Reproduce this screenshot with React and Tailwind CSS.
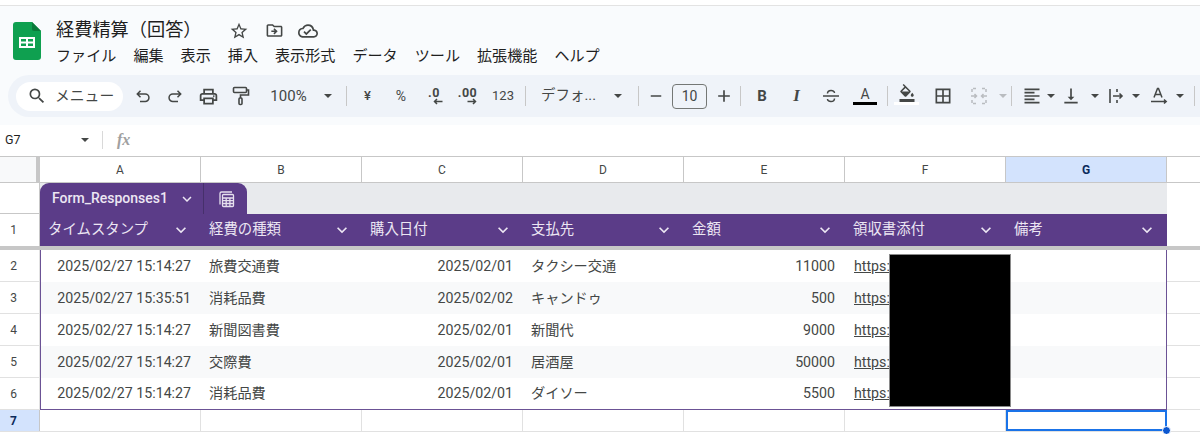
import React from "react";
import {
  MdStarBorder, MdOutlineDriveFileMove, MdOutlineCloudDone, MdSearch,
  MdOutlineLocalPrintshop, MdFormatColorFill,
  MdBorderAll, MdFormatAlignLeft, MdVerticalAlignBottom, MdKeyboardArrowDown, MdRemove, MdAdd,
} from "react-icons/md";

const menus = ["ファイル", "編集", "表示", "挿入", "表示形式", "データ", "ツール", "拡張機能", "ヘルプ"];
const letters = ["A", "B", "C", "D", "E", "F", "G"];
const heads = ["タイムスタンプ", "経費の種類", "購入日付", "支払先", "金額", "領収書添付", "備考"];
const rows = [
  { n: 2, ts: "2025/02/27 15:14:27", kind: "旅費交通費", date: "2025/02/01", to: "タクシー交通", amt: "11000" },
  { n: 3, ts: "2025/02/27 15:35:51", kind: "消耗品費", date: "2025/02/02", to: "キャンドゥ", amt: "500" },
  { n: 4, ts: "2025/02/27 15:14:27", kind: "新聞図書費", date: "2025/02/01", to: "新聞代", amt: "9000" },
  { n: 5, ts: "2025/02/27 15:14:27", kind: "交際費", date: "2025/02/01", to: "居酒屋", amt: "50000" },
  { n: 6, ts: "2025/02/27 15:14:27", kind: "消耗品費", date: "2025/02/01", to: "ダイソー", amt: "5500" },
];
const gridCols = "grid grid-cols-[40px_161px_repeat(6,161px)_1fr]";
const font = { fontFamily: 'Roboto, "Noto Sans CJK JP", sans-serif' };

function Caret({ className = "" }) {
  return <span className={`w-0 h-0 border-x-[4px] border-x-transparent border-t-[4px] border-t-[#444746] ${className}`} />;
}

function Btn({ w, className = "", children }) {
  return <div className={`flex items-center justify-center h-full shrink-0 text-[#444746] ${w} ${className}`}>{children}</div>;
}

function Sep({ className = "" }) {
  return <div className={`w-px h-[20px] bg-[#c7c7c7] shrink-0 ${className}`} />;
}

function SheetsLogo() {
  return (
    <svg width="28" height="38" viewBox="0 0 28 38">
      <path d="M3 0h16l9 9v26a3 3 0 0 1-3 3H3a3 3 0 0 1-3-3V3a3 3 0 0 1 3-3z" fill="#0fa050" />
      <path d="M19 0l9 9h-7a2 2 0 0 1-2-2z" fill="#0b7a3b" />
      <path d="M6 15h16v11H6z" fill="#fff" />
      <path d="M8 17h5v2.500H8zM15 17h5v2.500h-5zM8 21.500h5V24H8zM15 21.500h5V24h-5z" fill="#0fa050" />
    </svg>
  );
}

function UndoIcon({ flip }) {
  return (
    <svg width="16" height="16" viewBox="0 0 16 16" fill="none" stroke="#444746" strokeWidth="1.5" className={flip ? "-scale-x-100" : ""}>
      <path d="M2.500 6h7.700a3.300 3.300 0 0 1 0 7.500H5M5.500 2.800 2.300 6l3.200 3.200" />
    </svg>
  );
}

function PaintIcon() {
  return (
    <svg width="18" height="20" viewBox="0 0 18 20" fill="none" stroke="#444746" strokeWidth="1.6">
      <rect x="1.500" y="1.500" width="13" height="5" rx="1" />
      <path d="M14.500 4h2v5H8.500v3" />
      <rect x="7" y="12" width="3" height="6.500" rx="1" />
    </svg>
  );
}

function StrikeIcon() {
  return (
    <svg width="18" height="16" viewBox="0 0 18 16" fill="none" stroke="#444746" strokeWidth="1.5">
      <path d="M1 8h16" />
      <path d="M5.500 5.500c0-4 7-4 7-.5M12.500 10.500c0 4-7 4-7 .5" />
    </svg>
  );
}

function MergeIcon() {
  return (
    <svg width="20" height="20" viewBox="0 0 20 20" fill="none" stroke="#b9bcc0" strokeWidth="1.5">
      <path d="M7 2.500H3v5M13 2.500h4v5M7 17.500H3v-5M13 17.500h4v-5" strokeDasharray="3 1.500" />
      <path d="M2 10h5M18 10h-5M5.500 8l2 2-2 2M14.500 8l-2 2 2 2" />
    </svg>
  );
}

function WrapIcon() {
  return (
    <svg width="18" height="18" viewBox="0 0 18 18" fill="none" stroke="#444746" strokeWidth="1.6">
      <path d="M3 2v14M10 2v3M10 13v3M6 9h9M12.500 6.500 15 9l-2.500 2.500" />
    </svg>
  );
}

function RotateIcon() {
  return (
    <svg width="20" height="20" viewBox="0 0 20 20" fill="none" stroke="#444746" strokeWidth="1.500">
      <path d="M5 11.500 8.500 2.500h1L13 11.500M6.200 8.500h5.600M2 15.500h15M15 13.500l2.200 2-2.200 2" />
    </svg>
  );
}

function CalcIcon() {
  return (
    <svg width="18" height="18" viewBox="0 0 18 18" fill="none" stroke="#e6e0ee" strokeWidth="1.3">
      <path d="M3 14.500V3.500A1.500 1.500 0 0 1 4.500 2H15" />
      <rect x="5.500" y="4.500" width="11" height="12" rx="1" />
      <path d="M5.500 8h11M5.500 10.700h11M5.500 13.500h11M9.200 8v8.500M12.900 8v8.500" />
    </svg>
  );
}

function DecimalIcon({ label, dir }) {
  return (
    <div className="flex flex-col items-center">
      <span className="text-[12.500px] font-bold leading-[11px] tracking-[0.5px]">{label}</span>
      <svg width="10" height="7" viewBox="0 0 10 7" fill="none" stroke="#444746" strokeWidth="1.500" className={`ml-[8px] ${dir === "left" ? "" : "-scale-x-100"}`}>
        <path d="M9.500 3.500H1.500M4 1 1.500 3.500 4 6" />
      </svg>
    </div>
  );
}

function Toolbar() {
  return (
    <div className="mx-2 mr-0 h-[42px] rounded-l-[21px] bg-[#eff3f9] flex items-center pl-2 text-[#444746]">
      <div className="w-[107px] h-[29px] rounded-full bg-white flex items-center shrink-0 pl-[11px]">
        <MdSearch size={20} className="text-[#444746]" />
        <span className="ml-[8px] text-[14.800px] whitespace-nowrap">メニュー</span>
      </div>
      <Btn w="w-[32px] ml-1"><UndoIcon /></Btn>
      <Btn w="w-[32px]"><UndoIcon flip /></Btn>
      <Btn w="w-[34px]"><MdOutlineLocalPrintshop size={21} /></Btn>
      <Btn w="w-[32px]"><PaintIcon /></Btn>
      <Btn w="w-[61px] pl-[2px]"><span className="text-[15px]">100%</span></Btn>
      <Btn w="w-[20px]"><Caret /></Btn>
      <Btn w="w-[8px]" />
      <Sep />
      <Btn w="w-[41px]"><span className="text-[13px] font-medium">¥</span></Btn>
      <Btn w="w-[26px]"><span className="text-[14px]">%</span></Btn>
      <Btn w="w-[40px]"><DecimalIcon label=".0" dir="left" /></Btn>
      <Btn w="w-[27px]"><DecimalIcon label=".00" dir="right" /></Btn>
      <Btn w="w-[44px]"><span className="text-[13px]">123</span></Btn>
      <Sep />
      <Btn w="w-[80px] pl-[2px] justify-start ml-[13px]"><span className="text-[14.500px] whitespace-nowrap">デフォ...</span></Btn>
      <Btn w="w-[14px] -ml-[8px]"><Caret /></Btn>
      <Btn w="w-[13px]" />
      <Sep />
      <Btn w="w-[33px]"><MdRemove size={18} /></Btn>
      <div className="w-[35px] h-[25px] rounded-[4px] border border-[#747775] flex items-center justify-center text-[14px] shrink-0">10</div>
      <Btn w="w-[33px]"><MdAdd size={20} /></Btn>
      <Sep />
      <Btn w="w-[42px]"><span className="text-[15px] font-bold" style={{ fontFamily: "Roboto, sans-serif" }}>B</span></Btn>
      <Btn w="w-[27px]"><span className="text-[17px] font-bold italic" style={{ fontFamily: '"Liberation Serif", serif' }}>I</span></Btn>
      <Btn w="w-[41px]"><StrikeIcon /></Btn>
      <Btn w="w-[28px]">
        <div className="flex flex-col items-center">
          <span className="text-[14px] leading-[14px]">A</span>
          <span className="w-[24px] h-[3px] bg-black mt-[1px]" />
        </div>
      </Btn>
      <Btn w="w-[8px]" />
      <Sep />
      <Btn w="w-[37px]">
        <div className="flex flex-col items-center -mt-[4px]">
          <MdFormatColorFill size={18} />
          <span className="w-[25px] h-[3px] bg-white" />
        </div>
      </Btn>
      <Btn w="w-[35px]"><MdBorderAll size={20} /></Btn>
      <Btn w="w-[38px]"><MergeIcon /></Btn>
      <Btn w="w-[10px]"><span className="w-0 h-0 border-x-[4px] border-x-transparent border-t-[4px] border-t-[#b9bcc0]" /></Btn>
      <Btn w="w-[3px]" />
      <Sep />
      <Btn w="w-[40px]"><MdFormatAlignLeft size={20} /></Btn>
      <Btn w="w-[3px] -ml-[3px]"><Caret /></Btn>
      <Btn w="w-[38px]"><MdVerticalAlignBottom size={20} /></Btn>
      <Btn w="w-[10px]"><Caret /></Btn>
      <Btn w="w-[32px]"><WrapIcon /></Btn>
      <Btn w="w-[7px]"><Caret /></Btn>
      <Btn w="w-[40px]"><RotateIcon /></Btn>
      <Btn w="w-[2px]"><Caret /></Btn>
      <Btn w="w-[13px]" />
      <Sep />
    </div>
  );
}

export default function App() {
  return (
    <div className="h-[434px] w-[1200px] overflow-hidden bg-white text-[#444746]" style={font}>
      <div className="h-[6px] border-b border-[#e3e3e3]" />
      <div className="h-[119px] bg-[#f9fbfd] pt-[9px] flex flex-col">
        <div className="flex h-[60px] shrink-0">
          <div className="w-[56px] pl-[13px] pt-[7px] shrink-0"><SheetsLogo /></div>
          <div>
            <div className="flex items-center h-[28px]">
              <span className="text-[18.200px] leading-none text-[#1f1f1f] mt-[2px]">経費精算（回答）</span>
              <MdStarBorder size={20} className="ml-[27px] mt-[3px]" />
              <MdOutlineDriveFileMove size={19} className="ml-[16px] mt-[3px]" />
              <MdOutlineCloudDone size={20} className="ml-[14px] mt-[3px]" />
            </div>
            <div className="flex gap-[17px] text-[15.100px] leading-[24px] mt-[1px] text-[#1f1f1f]">
              {menus.map((m) => <span key={m}>{m}</span>)}
            </div>
          </div>
        </div>
        <Toolbar />
      </div>

      <div className="h-[32px] flex items-center border-b border-[#c7c7c7] pb-[1px]">
        <span className="w-[81px] pl-[5px] text-[12.500px] text-[#1f1f1f]">G7</span>
        <Caret />
        <div className="w-px h-[18px] bg-[#d9d9d9] ml-[13px]" />
        <span className="ml-[14px] text-[16px] italic font-bold text-[#a0a0a0]" style={{ fontFamily: '"Liberation Serif", serif' }}>fx</span>
      </div>

      <div className={`${gridCols} h-[26px] border-b border-[#c7c7c7] text-[12px]`}>
        <div className="bg-[#f8f9fa] border-r-4 border-[#c7c7c7]" />
        {letters.map((l) => (
          <div key={l} className={`flex items-center justify-center border-r border-[#c7c7c7] ${l === "G" ? "bg-[#d3e3fd] font-bold text-[#0b2a5b]" : ""}`}>{l}</div>
        ))}
        <div />
      </div>

      <div className={`${gridCols} h-[31px]`}>
        <div className="border-r border-b border-[#c7c7c7]" />
        <div className="col-span-7 bg-[#e8eaed] flex items-end">
          <div className="h-[31px] w-[164px] bg-[#5b3c88] rounded-tl-[9px] border-r border-[#46306b] flex items-center pl-[12px] text-[#ece6f3] text-[14px] font-medium">
            Form_Responses1
            <MdKeyboardArrowDown size={18} className="ml-[10px]" />
          </div>
          <div className="h-[31px] w-[43px] bg-[#5b3c88] rounded-tr-[9px] flex items-center justify-center">
            <CalcIcon />
          </div>
        </div>
        <div />
      </div>

      <div className={`${gridCols} h-[36px] border-b-4 border-[#c7c7c7]`}>
        <div className="flex items-center justify-center pr-[12px] border-r border-[#c7c7c7] text-[12px]">1</div>
        {heads.map((h) => (
          <div key={h} className="bg-[#5b3c88] text-[#ece6f3] text-[14.400px] flex items-center justify-between pr-[10px] pl-[8px]">
            <span>{h}</span>
            <MdKeyboardArrowDown size={20} />
          </div>
        ))}
        <div />
      </div>

      <div className="relative">
        {rows.map((r) => {
          const band = r.n === 3 || r.n === 5 ? "bg-[#f8f9fa]" : "bg-white";
          const last = r.n === 6 ? "border-b-[1.5px] border-b-[#6b5295]" : "";
          return (
            <div key={r.n} className={`${gridCols} h-[32px] text-[14.200px] text-[#444746]`}>
              <div className="flex items-center justify-center pr-[12px] border-r border-b border-[#e1e1e1] text-[12px]">{r.n}</div>
              <div className={`flex items-center justify-end pt-[1px] pr-[10px] border-l-[1.5px] border-[#6b5295] ${band} ${last}`}>{r.ts}</div>
              <div className={`flex items-center pt-[1px] pl-[8px] ${band} ${last}`}>{r.kind}</div>
              <div className={`flex items-center justify-end pt-[1px] pr-[10px] ${band} ${last}`}>{r.date}</div>
              <div className={`flex items-center pt-[1px] pl-[8px] ${band} ${last}`}>{r.to}</div>
              <div className={`flex items-center justify-end pt-[1px] pr-[10px] ${band} ${last}`}>{r.amt}</div>
              <div className={`flex items-center pt-[1px] pl-[9px] ${band} ${last}`}><span className="underline">https:</span></div>
              <div className={`border-r-[1.5px] border-[#6b5295] ${band} ${last}`} />
              <div className="border-b border-[#e1e1e1]" />
            </div>
          );
        })}
        {/* redaction */}
        <div className="absolute left-[889px] top-[4px] w-[122px] h-[153px] bg-black border border-[#8a8a8a]" />
      </div>

      <div className={`${gridCols} h-[22px] border-b border-[#e1e1e1]`}>
        <div className="flex items-center justify-center pr-[12px] bg-[#d3e3fd] border-r border-[#c7c7c7] text-[12px] font-bold text-[#0b2a5b]">7</div>
        {letters.slice(0, 6).map((l) => <div key={l} className="border-r border-[#e1e1e1]" />)}
        <div className="relative">
          <div className="absolute inset-0 border-2 border-[#1a73e8]" />
          <div className="absolute -right-[4px] -bottom-[4px] w-[9px] h-[9px] rounded-full bg-[#0b57d0] border border-white" />
        </div>
        <div />
      </div>
    </div>
  );
}
